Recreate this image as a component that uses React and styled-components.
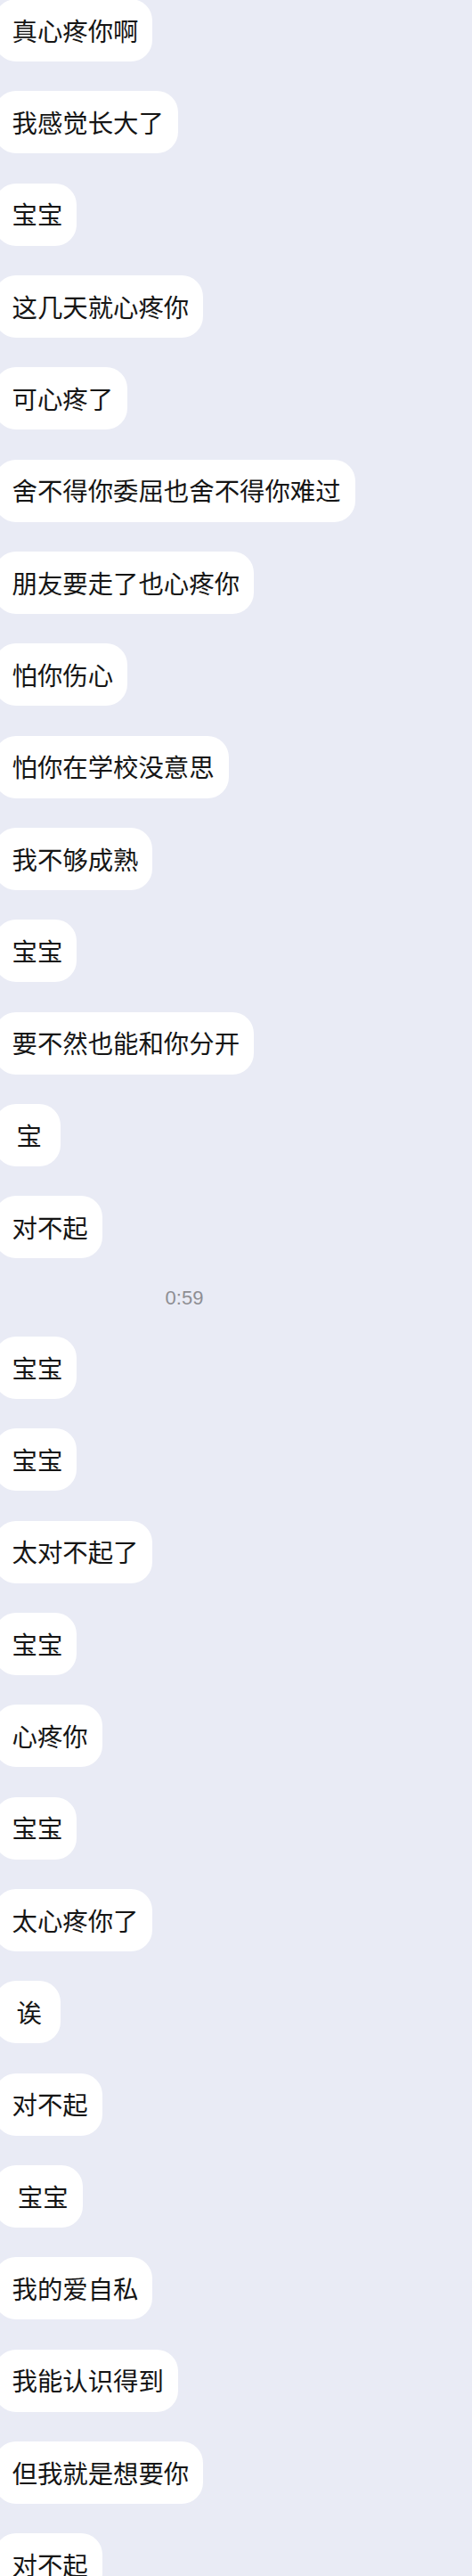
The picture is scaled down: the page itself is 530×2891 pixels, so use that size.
import React from 'react';
import styled, { createGlobalStyle } from 'styled-components';

const GlobalStyle = createGlobalStyle`
  html, body {
    margin: 0;
    padding: 0;
    background: #e9ebf5;
  }
  body {
    font-family: "Noto Sans CJK SC", "Noto Sans", sans-serif;
    -webkit-font-smoothing: antialiased;
  }
`;

const Thread = styled.div`
  display: flex;
  flex-direction: column;
  align-items: flex-start;
  gap: 33.33px;
  margin-top: -1px;
  background: #e9ebf5;
  min-height: 2891px;
  overflow: hidden;
`;

const Bubble = styled.div`
  display: flex;
  align-items: center;
  justify-content: center;
  box-sizing: border-box;
  height: 70px;
  min-width: 74px;
  margin-left: -6px;
  padding: 0 16px 0 19.5px;
  border-radius: 24px;
  background: #ffffff;
  color: #151515;
  font-family: "Noto Sans CJK SC", sans-serif;
  font-size: 28.4px;
  line-height: 1;
  white-space: pre;
`;

const Stamp = styled.div`
  width: 414px;
  height: 21px;
  line-height: 21px;
  text-align: center;
  color: #8e8e93;
  font-family: "Liberation Sans", Arial, sans-serif;
  font-size: 22px;
`;

const before = [
  '真心疼你啊',
  '我感觉长大了',
  '宝宝',
  '这几天就心疼你',
  '可心疼了',
  '舍不得你委屈也舍不得你难过',
  '朋友要走了也心疼你',
  '怕你伤心',
  '怕你在学校没意思',
  '我不够成熟',
  '宝宝',
  '要不然也能和你分开',
  '宝',
  '对不起',
];

const after = [
  '宝宝',
  '宝宝',
  '太对不起了',
  '宝宝',
  '心疼你',
  '宝宝',
  '太心疼你了',
  '诶',
  '对不起',
  ' 宝宝',
  '我的爱自私',
  '我能认识得到',
  '但我就是想要你',
  '对不起',
];

export default function App() {
  return (
    <>
      <GlobalStyle />
      <Thread>
        {before.map((t, i) => <Bubble key={`b${i}`}>{t}</Bubble>)}
        <Stamp>0:59</Stamp>
        {after.map((t, i) => <Bubble key={`a${i}`}>{t}</Bubble>)}
      </Thread>
    </>
  );
}
